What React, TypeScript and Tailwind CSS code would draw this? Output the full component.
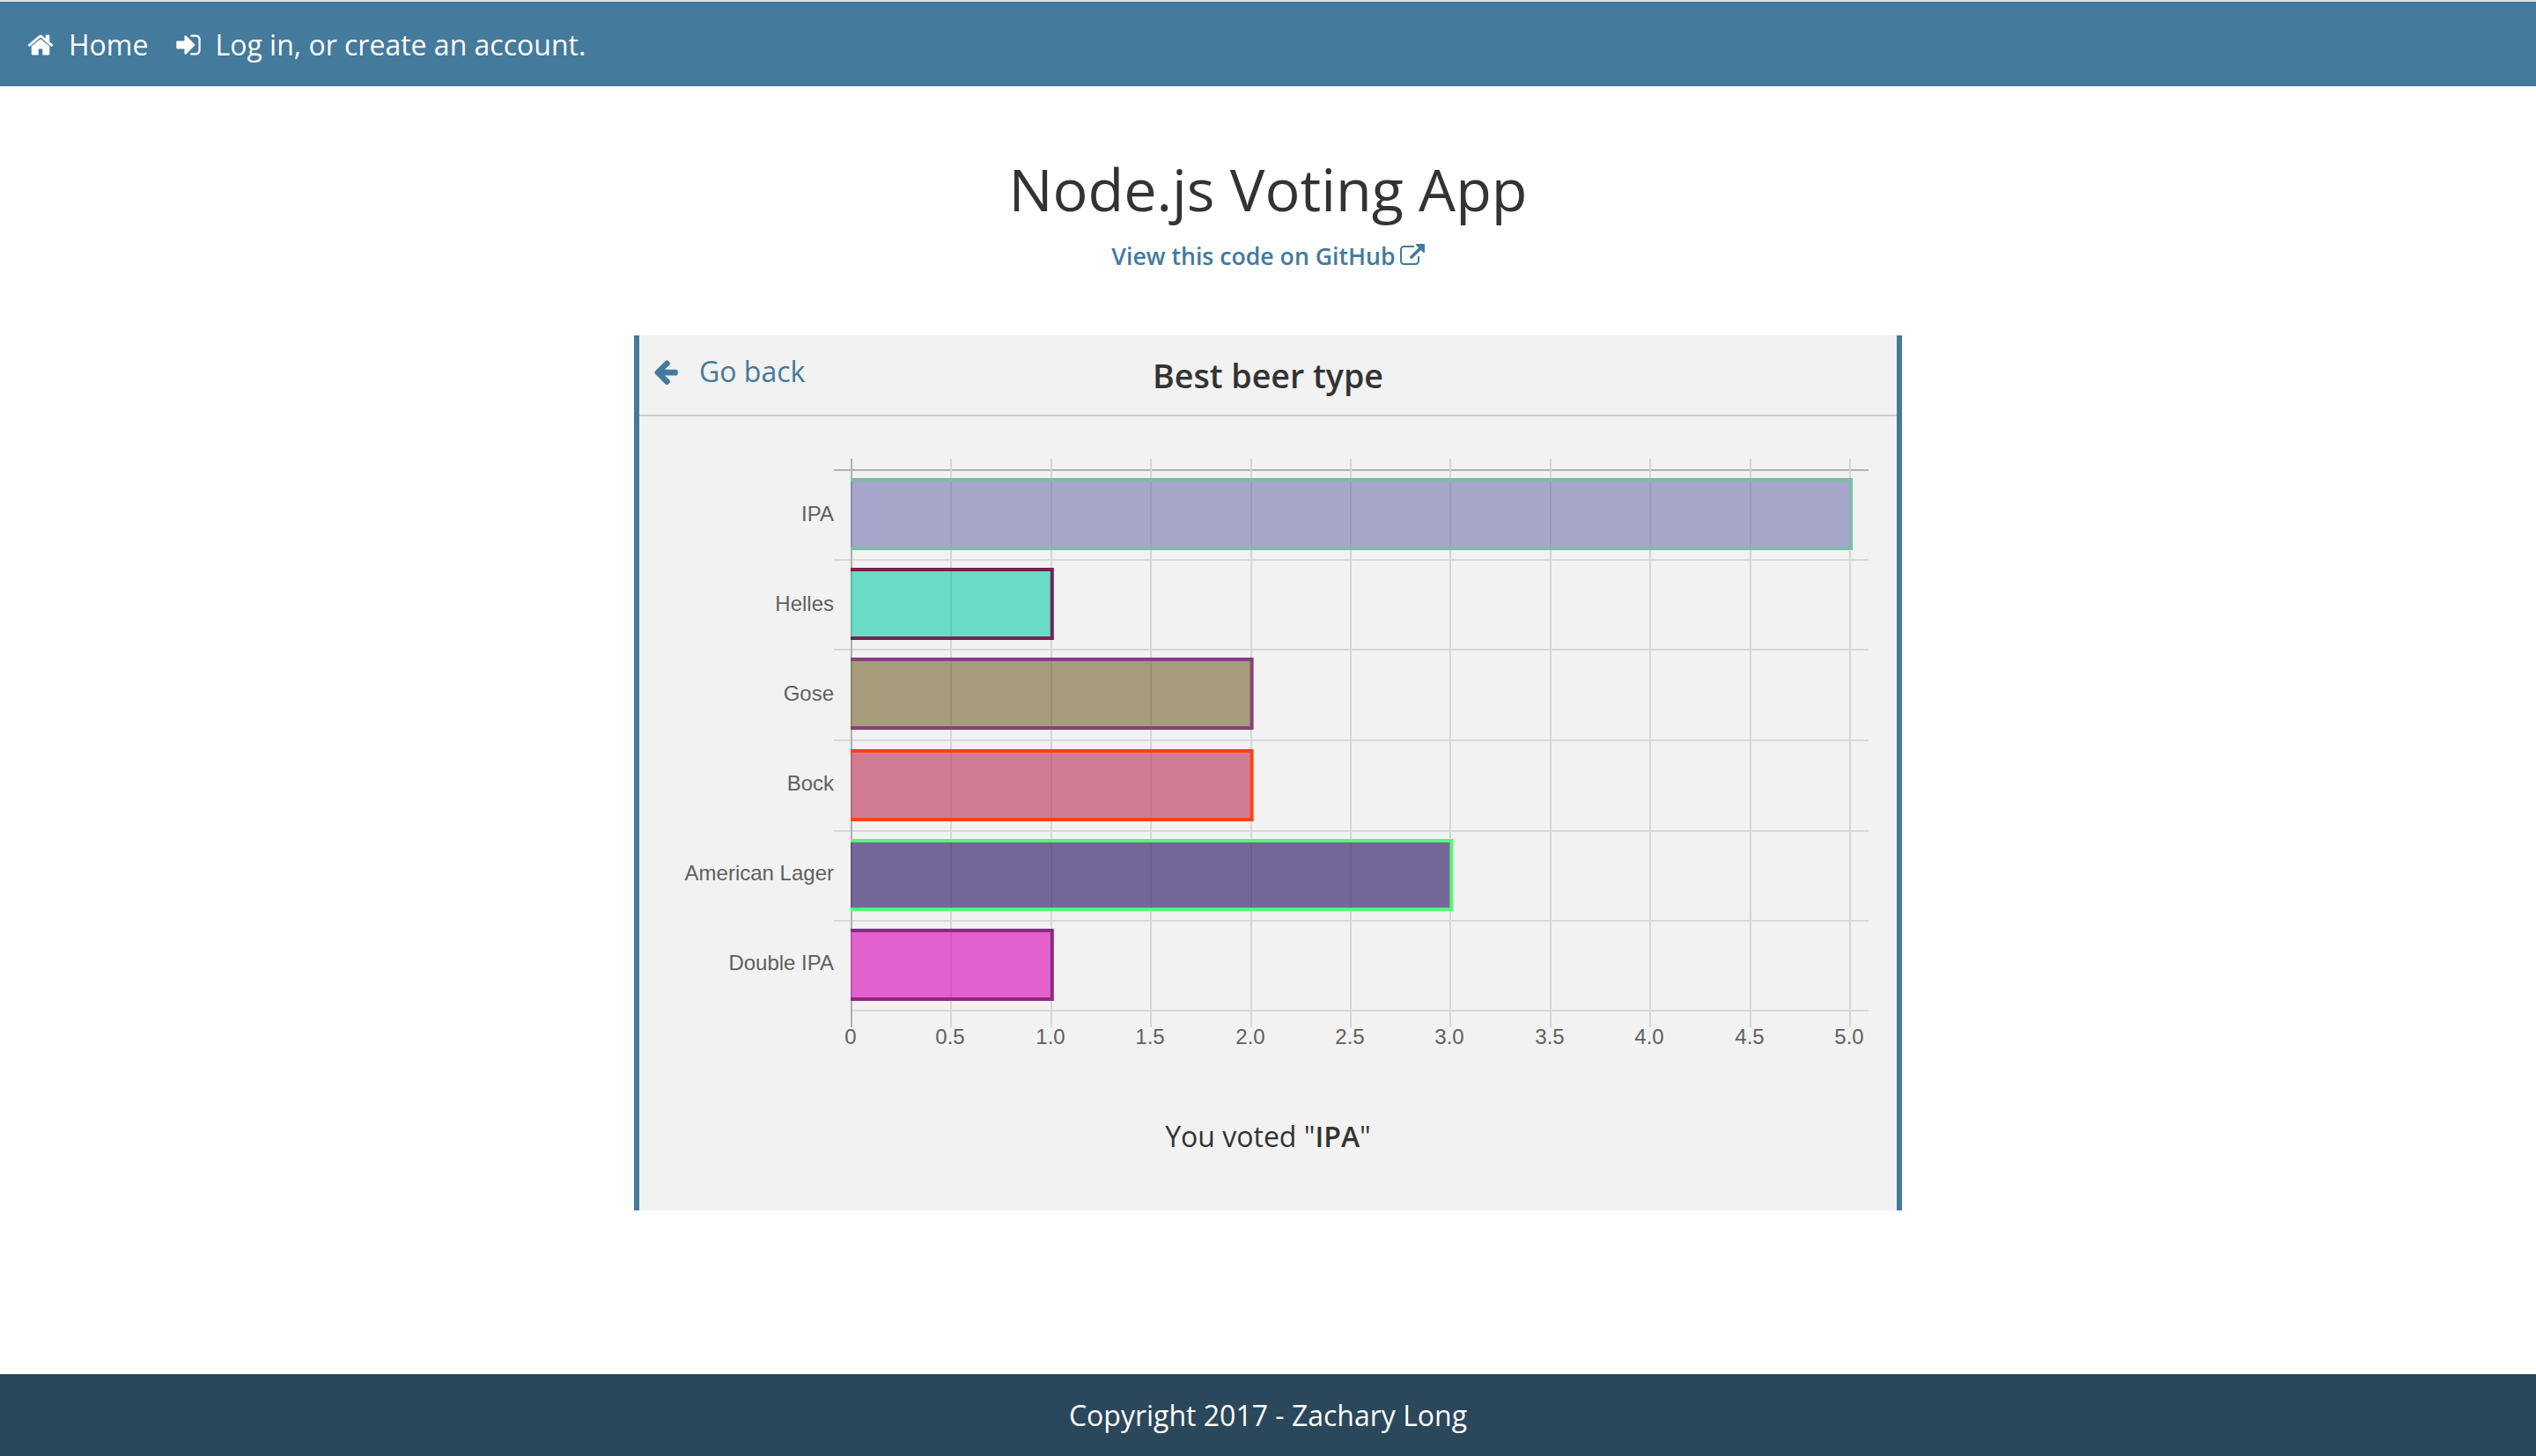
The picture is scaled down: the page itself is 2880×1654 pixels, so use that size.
const homePath = "M1472 992v480q0 26-19 45t-45 19h-384v-384h-256v384h-384q-26 0-45-19t-19-45v-480q0-1 .5-3t.5-3l575-474 575 474q1 2 1 6zm223-69l-62 74q-8 9-21 11h-3q-13 0-21-7l-692-577-692 577q-12 8-24 7-13-2-21-11l-62-74q-8-10-7-23.500t11-21.500l719-599q32-26 76-26t76 26l244 204v-195q0-14 9-23t23-9h192q14 0 23 9t9 23v408l219 182q10 8 11 21.500t-7 23.500z";
const signInPath = "M1312 896q0 26-19 45l-544 544q-19 19-45 19t-45-19-19-45v-288h-448q-26 0-45-19t-19-45v-384q0-26 19-45t45-19h448v-288q0-26 19-45t45-19 45 19l544 544q19 19 19 45zm352-352v704q0 119-84.500 203.500t-203.500 84.500h-320q-13 0-22.500-9.500t-9.500-22.500q0-4-1-20t-.5-26.500 3-23.500 10-19.500 20.500-6.500h320q66 0 113-47t47-113v-704q0-66-47-113t-113-47h-312q-13 0-22.500-9.500t-9.500-22.500q0-4-1-20t-.5-26.500 3-23.500 10-19.500 20.500-6.500h320q119 0 203.500 84.500t84.500 203.500z";
const externalPath = "M1408 928v320q0 119-84.500 203.500t-203.500 84.500h-832q-119 0-203.500-84.500t-84.500-203.500v-832q0-119 84.500-203.500t203.500-84.500h704q14 0 23 9t9 23v64q0 14-9 23t-23 9h-704q-66 0-113 47t-47 113v832q0 66 47 113t113 47h832q66 0 113-47t47-113v-320q0-14 9-23t23-9h64q14 0 23 9t9 23zm384-864v512q0 26-19 45t-45 19-45-19l-176-176-652 652q-10 10-23 10t-23-10l-114-114q-10-10-10-23t10-23l652-652-176-176q-19-19-19-45t19-45 45-19h512q26 0 45 19t19 45z";
const arrowPath = "M1664 896v128q0 53-32.500 90.500t-84.500 37.500h-704l293 294q38 36 38 90t-38 90l-75 76q-37 37-90 37-52 0-91-37l-651-652q-37-37-37-90 0-52 37-91l651-650q38-38 91-38 52 0 90 38l75 74q38 38 38 91t-38 91l-293 293h704q52 0 84.500 37.500t32.500 90.500z";

function Icon({ d, className }: { d: string; className: string }) {
  return (
    <svg viewBox="0 0 1792 1792" fill="currentColor" className={className}>
      <path d={d} />
    </svg>
  );
}

const ORIGIN = 967;
const STEP = 113.4;

const bars = [
  { label: "IPA", value: 5, fill: "#a7a5ca", stroke: "#7dbda8", top: 543 },
  { label: "Helles", value: 1, fill: "#6adcc4", stroke: "#762250", top: 645 },
  { label: "Gose", value: 2, fill: "#a59d7b", stroke: "#87417a", top: 747 },
  { label: "Bock", value: 2, fill: "#d17c92", stroke: "#ff4216", top: 851 },
  { label: "American Lager", value: 3, fill: "#746797", stroke: "#55f97a", top: 953 },
  { label: "Double IPA", value: 1, fill: "#e261cc", stroke: "#8c2a84", top: 1055 },
];

const rows = [534, 636, 738, 841, 944, 1046, 1148];
const ticks = ["0", "0.5", "1.0", "1.5", "2.0", "2.5", "3.0", "3.5", "4.0", "4.5", "5.0"];
const tickX = ticks.map((_, i) => Math.round(ORIGIN + i * STEP));

function BeerChart() {
  return (
    <svg viewBox="726 510 1428 690" className="block w-[1428px] h-[690px] mt-[37px]">
      {rows.map((y, i) => (
        <line key={y} x1={i === 6 ? ORIGIN : 947} x2={2122} y1={y} y2={y} stroke={i === 0 ? "#b0b0b0" : "#d8d8d8"} strokeWidth={2} />
      ))}
      {tickX.map((x, i) => (
        <line key={x} x1={x} x2={x} y1={521} y2={1167} stroke={i === 0 ? "#b0b0b0" : "#d6d6d6"} strokeWidth={2} />
      ))}
      {bars.map((b, i) => {
        const right = ORIGIN + b.value * 2 * STEP + 1;
        return (
          <g key={b.label}>
            <rect x={966} y={b.top + 2} width={right - 966} height={78} fill={b.fill} />
            {/* grid shows through the bars */}
            {tickX.filter((x) => x < right - 4).map((x, j) => (
              <line key={x} x1={x} x2={x} y1={b.top + 4} y2={b.top + 78} stroke="#000000" strokeOpacity={j === 0 ? 0.14 : 0.07} strokeWidth={2} />
            ))}
            <path d={`M966 ${b.top + 2}H${right}V${b.top + 80}H966`} fill="none" stroke={b.stroke} strokeWidth={4} />
            <text x={947} y={592 + i * 102} textAnchor="end" fontFamily="'Liberation Sans', Arial, sans-serif" fontSize={24} fill="#5f5f5f">
              {b.label}
            </text>
          </g>
        );
      })}
      {ticks.map((t, i) => (
        <text key={t} x={tickX[i] - 1} y={1186} textAnchor="middle" fontFamily="'Liberation Sans', Arial, sans-serif" fontSize={24} fill="#5f5f5f">
          {t}
        </text>
      ))}
    </svg>
  );
}

export default function App() {
  return (
    <div className="min-h-screen flex flex-col bg-white text-[#333333] font-['Open_Sans',sans-serif]">
      {/* Nav bar */}
      <nav className="h-[98px] border-t-2 border-[#dbe2e6] bg-[#447a9c] text-white flex items-center pl-[30px] pt-[2px] text-[32px]">
        <a className="flex items-center gap-4">
          <Icon d={homePath} className="w-8 h-8" />
          <span>Home</span>
        </a>
        <a className="flex items-center gap-[14px] ml-[30px]">
          <Icon d={signInPath} className="w-8 h-8" />
          <span>Log in, or create an account.</span>
        </a>
      </nav>

      {/* Title */}
      <header className="text-center">
        <h1 className="text-[66.5px] leading-[88px] mt-[72px]">Node.js Voting App</h1>
        <a className="mt-[13px] inline-flex items-center gap-[5px] text-[26.67px] font-semibold text-[#447a9c]">
          View this code on GitHub
          <Icon d={externalPath} className="w-7 h-7" />
        </a>
      </header>

      {/* Poll panel */}
      <section className="w-[1440px] h-[994px] mx-auto mt-[70px] border-x-[6px] border-[#447a9c] bg-[#f2f2f2]">
        <div className="h-[92px] border-b-2 border-[#cccccc] grid grid-cols-[1fr_auto_1fr] items-center">
          <a className="flex items-center gap-[22px] pl-[14px] text-[32px] text-[#447a9c] -mt-[8px]">
            <Icon d={arrowPath} className="w-8 h-8" />
            <span>Go back</span>
          </a>
          <h2 className="text-[37.6px] font-semibold text-[#333333] mt-[2px]">Best beer type</h2>
        </div>
        <BeerChart />
        <p className="mt-[67px] text-center text-[32px]">
          You voted "<span className="font-semibold">IPA</span>"
        </p>
      </section>

      {/* Footer */}
      <footer className="mt-auto h-[93px] bg-[#2a475b] text-white text-[32px] flex items-center justify-center">
        Copyright 2017 - Zachary Long
      </footer>
    </div>
  );
}
